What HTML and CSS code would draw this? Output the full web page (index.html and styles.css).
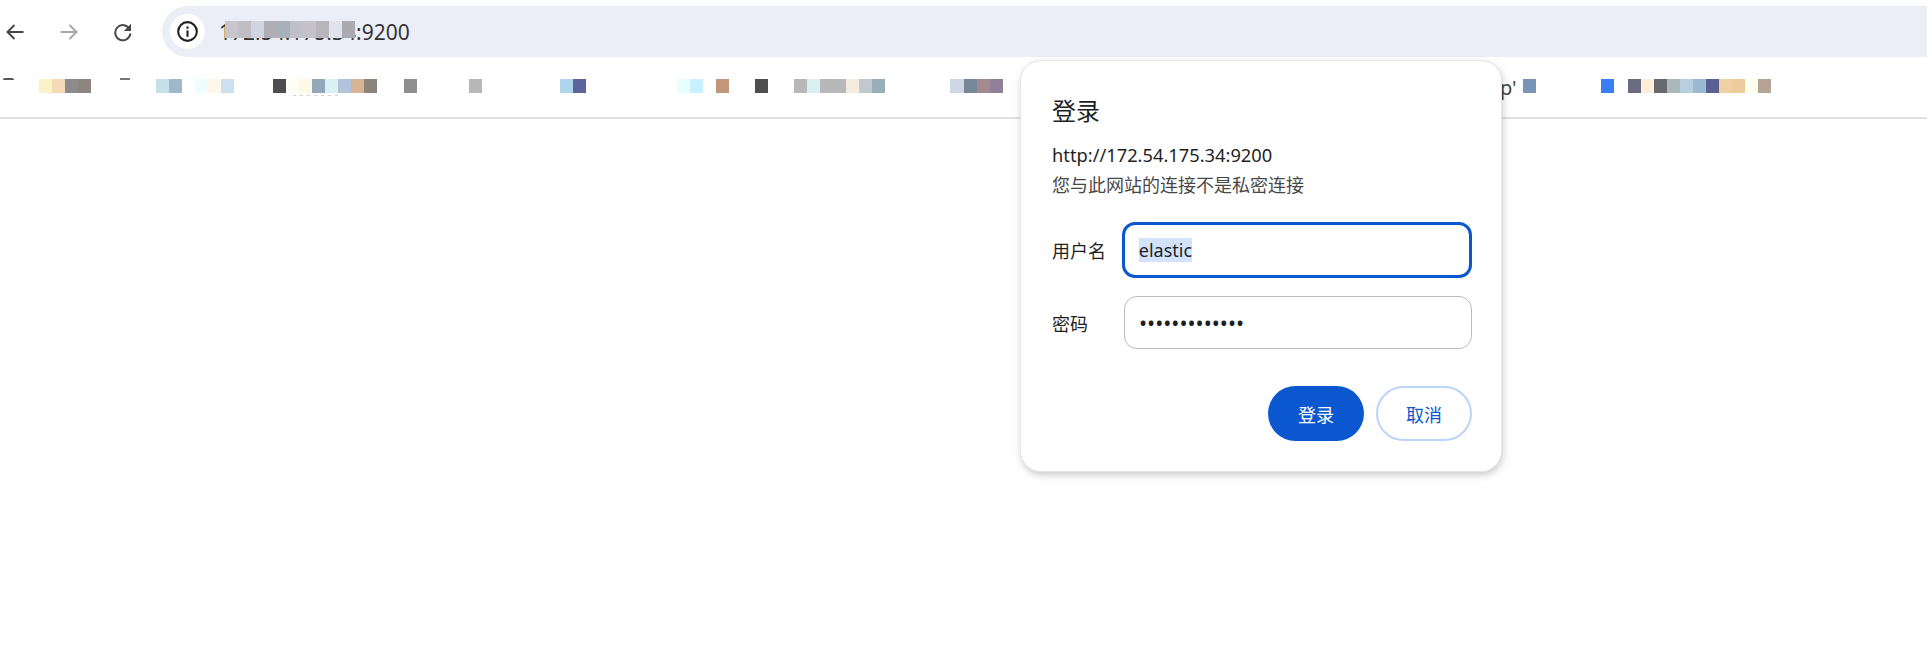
FILE: index.html
```html
<!DOCTYPE html>
<html lang="zh-CN">
<head>
  <meta charset="UTF-8">
  <title>172.54.175.34:9200</title>
  <link rel="stylesheet" href="styles.css">
</head>
<body>
  <header class="browser-top">
    <div class="toolbar">
      <div class="nav-buttons">
        <svg class="nav-icon" viewBox="0 0 20 20"><path d="M18.5 10H2.5M9.5 3L2.5 10l7 7" fill="none" stroke="#474747" stroke-width="2"/></svg>
        <svg class="nav-icon" viewBox="0 0 20 20"><path d="M1.5 10h16M10.5 3l7 7-7 7" fill="none" stroke="#a9a9a9" stroke-width="2"/></svg>
        <svg class="nav-icon" viewBox="0 0 20 20"><path d="M16.6 7.2A7.6 7.6 0 1 0 17.4 11.5" fill="none" stroke="#474747" stroke-width="2"/><path d="M18 1.8V9h-7.2z" fill="#474747"/></svg>
      </div>
      <div class="address-bar">
        <span class="site-info">
          <svg class="info-icon" viewBox="0 0 20 20"><circle cx="10" cy="10" r="8.9" fill="none" stroke="#1f1f1f" stroke-width="2"/><rect x="9" y="9" width="2" height="6" fill="#1f1f1f"/><rect x="9" y="5.2" width="2" height="2.2" fill="#1f1f1f"/></svg>
        </span>
        <span class="url">172.54.175.34:9200<span class="url-blur"></span></span>
      </div>
    </div>
    <div class="bookmarks">
      <div class="bookmark-blur blur-left"></div>
      <span class="bookmark-tail">p'</span>
      <div class="bookmark-blur blur-right"></div>
    </div>
  </header>

  <div class="login-dialog">
    <h1 class="dialog-title">登录</h1>
    <p class="dialog-origin">http://172.54.175.34:9200</p>
    <p class="dialog-note">您与此网站的连接不是私密连接</p>
    <div class="field-row field-row-first">
      <span class="field-label">用户名</span>
      <div class="field field-focus"><span class="selected">elastic</span></div>
    </div>
    <div class="field-row">
      <span class="field-label">密码</span>
      <div class="field field-plain"><span class="dots">•••••••••••••</span></div>
    </div>
    <div class="dialog-actions">
      <button class="btn btn-primary">登录</button>
      <button class="btn btn-outline">取消</button>
    </div>
  </div>
</body>
</html>
```

FILE: styles.css
```css
body {
  margin: 0;
  background: #fff;
  color: #1f1f1f;
  font-family: "Noto Sans", "Noto Sans CJK SC", sans-serif;
  overflow: hidden;
}
.browser-top {
  height: 117px;
  border-bottom: 2px solid #e1e1e1;
}
.toolbar {
  display: flex;
  padding-top: 6px;
}
.nav-buttons {
  display: flex;
  align-items: center;
  gap: 34px;
  width: 162px;
  padding-left: 5px;
  box-sizing: border-box;
}
.nav-icon {
  width: 20px;
  height: 20px;
}
.address-bar {
  flex: 1;
  display: flex;
  align-items: center;
  height: 51px;
  padding-left: 8px;
  background: #ebeef7;
  border-radius: 26px 0 0 26px;
}
.site-info {
  display: flex;
  align-items: center;
  justify-content: center;
  width: 35px;
  height: 35px;
  background: #fff;
  border-radius: 50%;
}
.info-icon {
  width: 21px;
  height: 21px;
}
.url {
  position: relative;
  margin-left: 14px;
  font-size: 21px;
  color: #333;
}
.url-blur {
  position: absolute;
  left: 6px;
  top: 3px;
  width: 130px;
  height: 17px;
  background: linear-gradient(to right,
    #c6c6cc 0 13px, #c0bec4 13px 26px, #d0d4de 26px 39px, #aeaeb4 39px 52px,
    #a8b0ba 52px 65px, #c0c0ca 65px 78px, #c4c2c8 78px 91px, #b8b6bc 91px 104px,
    #e0e3ec 104px 117px, #aaaab0 117px 130px);
}
.bookmarks {
  display: flex;
  align-items: flex-start;
  margin-top: 22px;
  height: 18px;
  background: repeating-linear-gradient(to right, #d0d0dc 0 3px, #fff 3px 7px) no-repeat 293px 16px / 45px 1px;
}
.bookmark-blur {
  height: 14px;
}
.blur-left {
  position: relative;
  width: 1500px;
  background: linear-gradient(to right,
    #fff 0 39px, #f9f3c8 39px 52px, #f6d9b9 52px 65px, #8d8c8c 65px 78px, #8b8680 78px 91px,
    #fff 91px 156px, #c8e0ea 156px 169px, #9db9ca 169px 182px,
    #fff 182px 195px, #effdfe 195px 208px, #fef8ea 208px 221px, #cce0f0 221px 234px,
    #fff 234px 273px, #4e4e4e 273px 286px, #fffef5 286px 299px, #fefae6 299px 312px,
    #93a9b9 312px 325px, #d9f0f5 325px 338px, #b2c3da 338px 351px, #d8b494 351px 364px, #8a847a 364px 377px,
    #fff 377px 404px, #8e8e8e 404px 417px,
    #fff 417px 469px, #b8b8b8 469px 482px,
    #fff 482px 560px, #aed4ee 560px 573px, #5c649b 573px 586px,
    #fff 586px 677px, #e9ffff 677px 690px, #c9f0ff 690px 703px,
    #fff 703px 716px, #c29678 716px 729px,
    #fff 729px 755px, #4e4e4e 755px 768px,
    #fff 768px 794px, #b8b8b8 794px 807px, #d9f0f2 807px 820px, #b8b8b8 820px 846px,
    #f5ece1 846px 859px, #c0c8d0 859px 872px, #9aaeb9 872px 885px,
    #fff 885px 950px, #cfd6e6 950px 964px, #778899 964px 977px, #a38a8e 977px 990px, #908098 990px 1003px,
    #fff 1003px);
}
/* bits of the icons that stick out above the mosaic */
.blur-left::before,
.blur-left::after {
  content: "";
  position: absolute;
  top: -1px;
  height: 2px;
  background: #555;
}
.blur-left::before {
  left: 3px;
  width: 11px;
  border-radius: 5px 5px 0 0;
}
.blur-left::after {
  left: 120px;
  width: 10px;
  background: #777;
}
.bookmark-tail {
  width: 23px;
  padding-top: 2px;
  font-size: 20px;
  line-height: 14px;
  color: #444;
}
.blur-right {
  width: 248px;
  background: linear-gradient(to right,
    #7a94b8 0 13px, #fff 13px 78px, #3a7ef5 78px 91px, #fff 91px 105px,
    #6c6c80 105px 118px, #ffeeda 118px 131px, #666a6e 131px 144px, #a9b8b8 144px 157px,
    #b8d0de 157px 170px, #9cb9d3 170px 183px, #5a6090 183px 196px, #efd0a4 196px 209px,
    #eecb9a 209px 222px, #fffff0 222px 235px, #b4a396 235px 248px);
}
.login-dialog {
  position: absolute;
  left: 1021px;
  top: 61px;
  width: 480px;
  height: 410px;
  box-sizing: border-box;
  padding: 33px 29px 0 31px;
  background: #fff;
  border-radius: 20px;
  box-shadow: 0 0 0 1px #e6e6e6, 1px 3px 8px rgba(0, 0, 0, 0.25);
}
.dialog-title {
  margin: 0;
  font-size: 24px;
  font-weight: 400;
  line-height: 34px;
}
.dialog-origin {
  margin: 15px 0 0;
  font-size: 18.3px;
  line-height: 24px;
}
.dialog-note {
  margin: 5px 0 0;
  font-size: 18px;
  line-height: 26px;
  color: #474747;
}
.field-row {
  display: flex;
  align-items: center;
  margin-top: 18px;
}
.field-row-first {
  margin-top: 24px;
}
.field-label {
  width: 70px;
  font-size: 18px;
}
.field {
  display: flex;
  align-items: center;
  box-sizing: border-box;
  border-radius: 13px;
  font-size: 18px;
}
.field-focus {
  width: 351px;
  height: 56px;
  padding-left: 14px;
  border: 3px solid #0b57d0;
}
.field-plain {
  width: 348px;
  height: 53px;
  margin-left: 2px;
  padding-left: 14px;
  border: 1px solid #bcbcbc;
}
.selected {
  background: #d3e3fd;
  line-height: 24px;
}
.dots {
  font-size: 21.5px;
  color: #1f1f1f;
}
.dialog-actions {
  display: flex;
  justify-content: flex-end;
  gap: 12px;
  margin-top: 37px;
}
.btn {
  width: 96px;
  height: 55px;
  border-radius: 28px;
  font-family: inherit;
  font-size: 18px;
  padding: 0;
}
.btn-primary {
  background: #0b57d0;
  border: none;
  color: #fff;
}
.btn-outline {
  background: #fff;
  border: 2px solid #bbd4fb;
  color: #0b57d0;
}
```
